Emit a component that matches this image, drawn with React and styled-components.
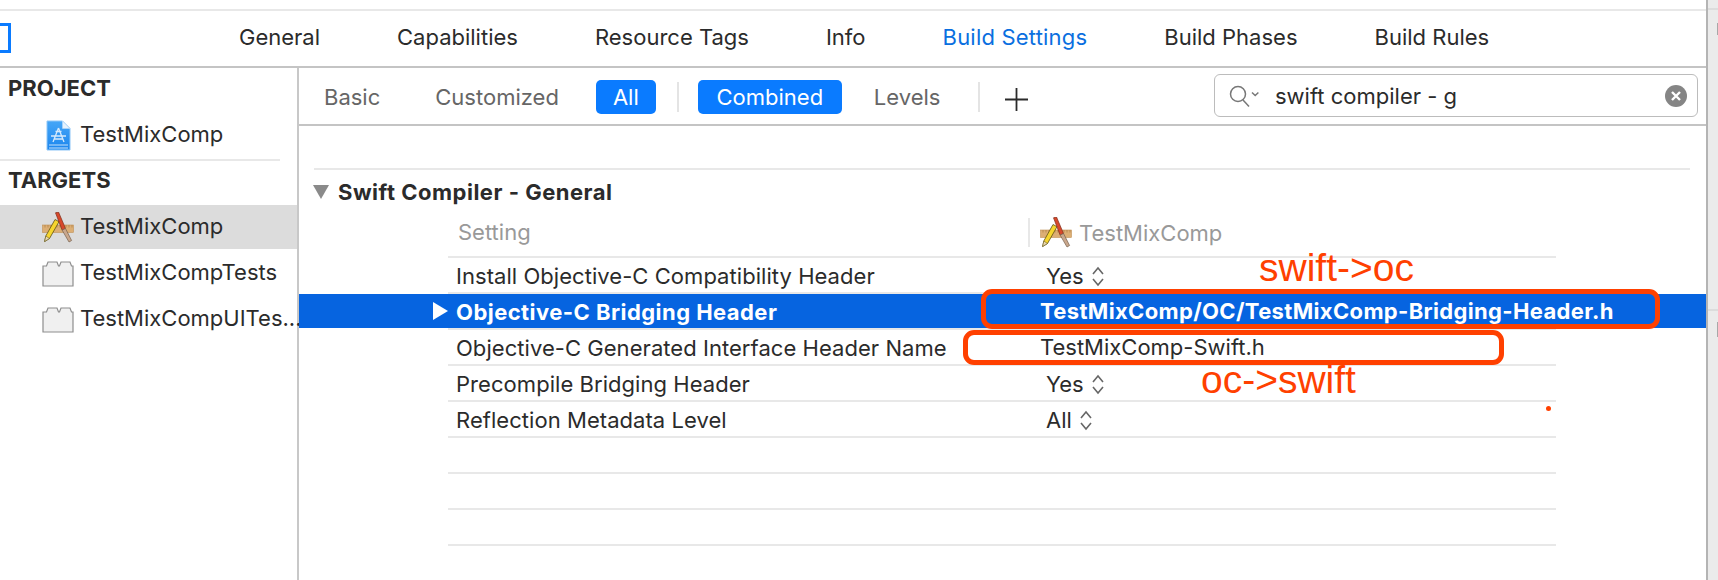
import React from "react";
import styled, { createGlobalStyle } from "styled-components";

const Global = createGlobalStyle`
  html, body { margin: 0; padding: 0; background: #fff; }
  * { box-sizing: border-box; }
`;

const Page = styled.div`
  position: relative;
  width: 1718px;
  height: 580px;
  overflow: hidden;
  display: flex;
  background: #fff;
  font-family: Inter, "Liberation Sans", sans-serif;
  font-size: 22px;
  color: #2b2b2b;
`;
const Workspace = styled.div`
  width: 1706px;
  display: flex;
  flex-direction: column;
  flex-shrink: 0;
`;
const Gutter = styled.div`
  flex: 1;
  display: flex;
  flex-direction: column;
  align-items: flex-end;
  background: #ebebeb;
  border-left: 2px solid #b4b4b4;
`;
const GutterLine = styled.div`
  width: 100%;
  height: 2px;
  flex-shrink: 0;
  margin-top: ${(p) => p.$mt}px;
  background: #dcdcdc;
`;
const GutterMark = styled.div`
  width: 1px;
  height: ${(p) => p.$h}px;
  flex-shrink: 0;
  margin-top: ${(p) => p.$mt}px;
  background: #a8a8a8;
`;
const TopStrip = styled.div`
  height: 11px;
  flex-shrink: 0;
  border-bottom: 2px solid #e8e8e8;
`;
const TabBar = styled.div`
  height: 57px;
  flex-shrink: 0;
  display: flex;
  align-items: center;
  border-bottom: 2px solid #c4c4c4;
`;
const Marker = styled.div`
  width: 11px;
  height: 30px;
  margin-right: 228px;
  margin-top: -1px;
  flex-shrink: 0;
  border: 3px solid #0a7bff;
  border-left: none;
`;
const Tabs = styled.div`
  display: flex;
  gap: 77px;
  margin-top: -4px;
`;
const Tab = styled.div`
  white-space: nowrap;
  color: ${(p) => (p.$active ? "#0a6fe0" : "#2b2b2b")};
  letter-spacing: ${(p) => (p.$active ? "0.2px" : "0")};
`;
const Body = styled.div`
  flex: 1;
  display: flex;
  min-height: 0;
`;
const Sidebar = styled.div`
  width: 299px;
  flex-shrink: 0;
  border-right: 2px solid #c8c8c8;
`;
const SideHeading = styled.div`
  height: ${(p) => p.$h}px;
  padding: 0 0 0 8px;
  line-height: ${(p) => p.$lh}px;
  font-weight: 700;
  color: #2b2b2b;
`;
const SideRule = styled.div`
  width: 280px;
  height: 2px;
  margin-top: 1px;
  background: #e8e8e8;
`;
const SideRow = styled.div`
  height: 44px;
  display: flex;
  align-items: center;
  margin-bottom: 2px;
  padding-left: 42px;
  background: ${(p) => (p.$selected ? "#dcdcdc" : "transparent")};
  margin-top: ${(p) => (p.$top ? p.$top : 0)}px;
`;
const SideIcon = styled.div`
  width: 32px;
  height: 32px;
  margin-right: 6px;
  flex-shrink: 0;
  display: flex;
  align-items: center;
  justify-content: center;
`;
const SideLabel = styled.div`
  white-space: nowrap;
  margin-top: -2px;
`;
const Main = styled.div`
  flex: 1;
  display: flex;
  flex-direction: column;
  min-width: 0;
`;
const FilterBar = styled.div`
  height: 58px;
  flex-shrink: 0;
  display: flex;
  align-items: flex-start;
  padding: 12px 8px 0 25px;
  border-bottom: 2px solid #c4c4c4;
`;
const Filter = styled.div`
  height: 34px;
  line-height: 35px;
  width: ${(p) => (p.$w ? `${p.$w}px` : "auto")};
  text-align: center;
  margin-left: ${(p) => p.$ml || 0}px;
  border-radius: 5px;
  white-space: nowrap;
  color: ${(p) => (p.$w ? "#fff" : "#666")};
  background: ${(p) => (p.$w ? "#0a7bff" : "transparent")};
`;
const FilterSep = styled.div`
  width: 2px;
  height: 30px;
  margin: 2px 0 0 ${(p) => p.$ml}px;
  background: #e4e4e4;
`;
const AddIcon = styled.svg`
  width: 23px;
  height: 23px;
  margin: 8px 0 0 25px;
`;
const Search = styled.div`
  margin-left: auto;
  margin-top: -6px;
  width: 484px;
  height: 43px;
  display: flex;
  align-items: center;
  padding: 0 10px 0 14px;
  border: 1px solid #bcbcbc;
  border-radius: 6px;
`;
const SearchGlyph = styled.svg`
  width: 32px;
  height: 24px;
  flex-shrink: 0;
  margin-right: 14px;
`;
const SearchText = styled.div`
  flex: 1;
  margin-top: 1px;
`;
const ClearGlyph = styled.svg`
  width: 22px;
  height: 22px;
`;
const Section = styled.div`
  padding-top: 42px;
`;
const SectionRule = styled.div`
  height: 2px;
  margin: 0 16px 0 15px;
  background: #e8e8e8;
`;
const SectionTitle = styled.div`
  height: 43px;
  display: flex;
  align-items: center;
  padding-left: 14px;
  font-weight: 700;
  letter-spacing: 0.5px;
`;
const Disclosure = styled.svg`
  width: 16px;
  height: 14px;
  margin-right: 9px;
`;
const Grid = styled.div`
  padding-left: 134px;
`;
const HeadRow = styled.div`
  margin-left: 15px;
  width: 1108px;
  height: 45px;
  display: flex;
  padding-top: 2px;
  border-bottom: 2px solid #e8e8e8;
  color: #999;
`;
const HeadName = styled.div`
  width: 580px;
  padding: 4px 0 0 10px;
`;
const HeadValue = styled.div`
  display: flex;
  align-items: center;
  height: 29px;
  margin-top: 3px;
  padding-left: 10px;
  border-left: 2px solid #e8e8e8;
`;
const HeadLabel = styled.span`
  margin-left: 7px;
`;
const RowWrap = styled.div`
  margin-left: -134px;
  padding-left: 134px;
  display: flex;
  background: ${(p) =>
    p.$selected
      ? "linear-gradient(#0664e0 34px, transparent 34px)"
      : "transparent"};
`;
const Slot = styled.div`
  width: 15px;
  height: 34px;
  flex-shrink: 0;
  display: flex;
  align-items: center;
`;
const Cell = styled.div`
  width: 1108px;
  height: 36px;
  display: flex;
  align-items: center;
  padding: 2px 0 0 8px;
  border-bottom: 2px solid #e8e8e8;
  color: ${(p) => (p.$selected ? "#fff" : "#2b2b2b")};
  font-weight: ${(p) => (p.$selected ? 700 : 400)};
`;
const Name = styled.div`
  width: 584px;
  flex-shrink: 0;
  white-space: nowrap;
  letter-spacing: ${(p) => (p.$selected ? "0.45px" : "0.05px")};
`;
const Value = styled.div`
  display: flex;
  align-items: center;
  white-space: nowrap;
  padding-left: ${(p) => p.$indent || 0}px;
  margin-top: ${(p) => (p.$indent ? 0 : -3)}px;
  letter-spacing: ${(p) => (p.$selected ? "0.34px" : "0")};
`;
const Stepper = styled.svg`
  width: 14px;
  height: 21px;
  margin-left: 7px;
`;
const Callout = styled.div`
  position: absolute;
  left: ${(p) => p.$x}px;
  top: ${(p) => p.$y}px;
  width: ${(p) => p.$w}px;
  height: ${(p) => p.$h}px;
  border: 5px solid #ff4000;
  border-radius: 11px;
`;
const Note = styled.div`
  position: absolute;
  left: ${(p) => p.$x}px;
  top: ${(p) => p.$y}px;
  font-family: "Liberation Sans", Arial, sans-serif;
  font-size: 39px;
  line-height: 40px;
  color: #ff4000;
  white-space: nowrap;
`;
const Dot = styled.div`
  position: absolute;
  left: 1546px;
  top: 406px;
  width: 5px;
  height: 5px;
  border-radius: 50%;
  background: #ff4000;
`;

const ProjectIcon = () => (
  <svg width="25" height="31" viewBox="0 0 25 31">
    <defs>
      <linearGradient id="pi" x1="0" y1="0" x2="0" y2="1">
        <stop offset="0" stopColor="#45a6f7" />
        <stop offset="1" stopColor="#1c86ee" />
      </linearGradient>
    </defs>
    <path d="M1 1h15.5L24 8.5V30H1z" fill="url(#pi)" stroke="#8ec6f7" strokeWidth="1" />
    <path d="M16.5 1L24 8.5h-7.5z" fill="#e6f2fd" stroke="#b5d8f8" strokeWidth="0.6" />
    <path d="M3 25h19M3 28h19" stroke="#c4e1fb" strokeWidth="1" />
    <path
      d="M12.5 8L7 22M12.5 8L18 22M9.5 11.5h6M5 16h15M8 19h9"
      stroke="#d6eafc"
      strokeWidth="1.3"
      fill="none"
    />
  </svg>
);
const AppIcon = () => (
  <svg width="32" height="31" viewBox="0 0 32 31">
    <rect x="0.5" y="13" width="31" height="7.5" fill="#dcae74" stroke="#c19258" strokeWidth="0.6" />
    <path
      d="M3 13v2.5M6 13v2.5M9 13v2.5M12 13v2.5M15 13v2.5M18 13v2.5M21 13v2.5M24 13v2.5M27 13v2.5M30 13v2.5"
      stroke="#a5773e"
      strokeWidth="0.6"
    />
    <path d="M2.6 29.5L3.8 24 13 7.5l4 2.2L7.5 26.5z" fill="#f6d52e" stroke="#5e5214" strokeWidth="0.8" />
    <path d="M2.6 29.5L3.8 24l3.7 2.5z" fill="#e9d7b0" stroke="#5e5214" strokeWidth="0.5" />
    <path d="M13.5 0.8L16.5 0l7 16.5-3.4 1.6z" fill="#d8472a" stroke="#7c2c18" strokeWidth="0.7" />
    <path d="M20.1 18.1l3.4-1.6L29.6 28.5 27 30z" fill="#c9a78c" stroke="#75604e" strokeWidth="0.7" />
  </svg>
);
const TargetIcon = () => (
  <svg width="32" height="27" viewBox="0 0 32 27">
    <path
      d="M1 26V6h3.5l1.5-4h9l1.5 4h1l1.5-4h9l1.5 4H31v20z"
      fill="#f0f0f0"
      stroke="#8e8e8e"
      strokeWidth="1.2"
    />
  </svg>
);
const StepperIcon = () => (
  <Stepper viewBox="0 0 14 21">
    <path d="M2 8l5-6 5 6M2 13l5 6 5-6" fill="none" stroke="#666" strokeWidth="1.6" />
  </Stepper>
);

const rows = [
  { name: "Install Objective-C Compatibility Header", value: "Yes", step: true },
  { name: "Objective-C Bridging Header", value: "TestMixComp/OC/TestMixComp-Bridging-Header.h", selected: true },
  { name: "Objective-C Generated Interface Header Name", value: "TestMixComp-Swift.h" },
  { name: "Precompile Bridging Header", value: "Yes", step: true },
  { name: "Reflection Metadata Level", value: "All", step: true },
  {},
  {},
  {},
];

export default function App() {
  return (
    <Page>
      <Global />
      <Workspace>
        <TopStrip />
        <TabBar>
          <Marker />
          <Tabs>
            <Tab>General</Tab>
            <Tab>Capabilities</Tab>
            <Tab>Resource Tags</Tab>
            <Tab>Info</Tab>
            <Tab $active>Build Settings</Tab>
            <Tab>Build Phases</Tab>
            <Tab>Build Rules</Tab>
          </Tabs>
        </TabBar>
        <Body>
          <Sidebar>
            <SideHeading $h={40} $lh={40}>PROJECT</SideHeading>
            <SideRow $top={5}>
              <SideIcon><ProjectIcon /></SideIcon>
              <SideLabel>TestMixComp</SideLabel>
            </SideRow>
            <SideRule />
            <SideHeading $h={44} $lh={38}>TARGETS</SideHeading>
            <SideRow $selected>
              <SideIcon><AppIcon /></SideIcon>
              <SideLabel>TestMixComp</SideLabel>
            </SideRow>
            <SideRow>
              <SideIcon><TargetIcon /></SideIcon>
              <SideLabel>TestMixCompTests</SideLabel>
            </SideRow>
            <SideRow>
              <SideIcon><TargetIcon /></SideIcon>
              <SideLabel>TestMixCompUITes...</SideLabel>
            </SideRow>
          </Sidebar>
          <Main>
            <FilterBar>
              <Filter>Basic</Filter>
              <Filter $ml={55}>Customized</Filter>
              <Filter $w={60} $ml={37}>All</Filter>
              <FilterSep $ml={21} />
              <Filter $w={144} $ml={19}>Combined</Filter>
              <Filter $ml={32}>Levels</Filter>
              <FilterSep $ml={38} />
              <AddIcon viewBox="0 0 23 23">
                <path d="M0 11.5h23M11.5 0v23" stroke="#2b2b2b" strokeWidth="1.8" />
              </AddIcon>
              <Search>
                <SearchGlyph viewBox="0 0 32 24">
                  <circle cx="9" cy="10" r="7.5" fill="none" stroke="#777" strokeWidth="1.5" />
                  <path d="M14 16l6 6.5" stroke="#777" strokeWidth="1.5" />
                  <path d="M23 8.5l3.2 3 3.2-3" fill="none" stroke="#777" strokeWidth="1.5" />
                </SearchGlyph>
                <SearchText>swift compiler - g</SearchText>
                <ClearGlyph viewBox="0 0 22 22">
                  <circle cx="11" cy="11" r="11" fill="#858585" />
                  <path d="M7 7l8 8M15 7l-8 8" stroke="#fff" strokeWidth="2.4" />
                </ClearGlyph>
              </Search>
            </FilterBar>
            <Section>
              <SectionRule />
              <SectionTitle>
                <Disclosure viewBox="0 0 16 14">
                  <path d="M0 0h16L8 14z" fill="#8a8a8a" />
                </Disclosure>
                Swift Compiler - General
              </SectionTitle>
              <Grid>
                <HeadRow>
                  <HeadName>Setting</HeadName>
                  <HeadValue>
                    <AppIcon />
                    <HeadLabel>TestMixComp</HeadLabel>
                  </HeadValue>
                </HeadRow>
                {rows.map((r, i) => (
                  <RowWrap key={i} $selected={r.selected}>
                    <Slot>
                      {r.selected && (
                        <svg width="15" height="18" viewBox="0 0 15 18">
                          <path d="M0 0l15 9-15 9z" fill="#fff" />
                        </svg>
                      )}
                    </Slot>
                    <Cell $selected={r.selected}>
                      <Name $selected={r.selected}>{r.name}</Name>
                      {r.value && (
                        <Value $indent={r.step ? 6 : 0} $selected={r.selected}>
                          {r.value}
                          {r.step && <StepperIcon />}
                        </Value>
                      )}
                    </Cell>
                  </RowWrap>
                ))}
              </Grid>
            </Section>
          </Main>
        </Body>
      </Workspace>
      <Gutter>
        <GutterLine $mt={8} />
        <GutterMark $mt={13} $h={12} />
        <GutterLine $mt={274} />
        <GutterMark $mt={11} $h={15} />
      </Gutter>
      <Callout $x={981} $y={289} $w={679} $h={40} />
      <Callout $x={963} $y={330} $w={541} $h={35} />
      <Note $x={1259} $y={248}>swift-&gt;oc</Note>
      <Note $x={1201} $y={360}>oc-&gt;swift</Note>
      <Dot />
    </Page>
  );
}
